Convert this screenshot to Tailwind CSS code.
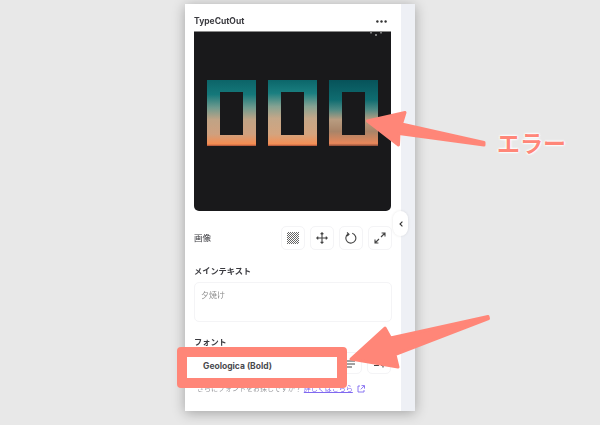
<!DOCTYPE html>
<html lang="ja">
  <head>
    <meta charset="UTF-8" />
    <title>TypeCutOut</title>
    <script src="https://cdn.jsdelivr.net/npm/@tailwindcss/browser@4"></script>
  </head>
  <body class="relative w-[600px] h-[425px] overflow-hidden bg-[#e8e8e8] pl-[185px] pt-[4px] font-['Inter','Noto_Sans_CJK_JP',sans-serif]">

    <!-- Panel -->
    <div class="relative flex w-[230px] h-[407px] shadow-[0_2px_12px_rgba(0,0,0,0.3)] blur-[0.35px]">
      <div class="w-[216px] bg-white px-[9px] pt-[9px]">
        <div class="flex items-center justify-between h-[17px] pr-[5px]">
          <p class="text-[8.500px] font-bold text-[#3a3a3f]">TypeCutOut</p>
          <svg width="11" height="3" viewBox="0 0 11 3" fill="#333"><circle cx="1.4" cy="1.5" r="1.2"/><circle cx="5.5" cy="1.5" r="1.2"/><circle cx="9.6" cy="1.5" r="1.2"/></svg>
        </div>

        <!-- Preview image -->
        <div class="relative flex justify-center gap-[12px] w-[197px] h-[180px] mt-[1px] pt-[48px] bg-[#19191b] rounded-b-[5px] border-t border-[#8a8a8a]">
          <svg class="absolute right-[9px] top-0" width="12" height="5" viewBox="0 0 12 5" fill="none" stroke="#ddd" stroke-width="1"><path d="M1 0v1.5M11 0v1.5M6 2v2"/></svg>
          <div class="flex items-center justify-center w-[49px] h-[66px] bg-[linear-gradient(180deg,#0c6468_0%,#15787a_22%,#6f9a8e_42%,#c0a385_60%,#cfa07e_82%,#f58c50_97%,#a8503a_100%)]">
            <div class="w-[23px] h-[43px] bg-[#19191b]"></div>
          </div>
          <div class="flex items-center justify-center w-[49px] h-[66px] bg-[linear-gradient(180deg,#0c666a_0%,#1a7f80_20%,#85a292_40%,#c4a788_58%,#d4a47e_82%,#f48f55_97%,#a8503a_100%)]">
            <div class="w-[23px] h-[43px] bg-[#19191b]"></div>
          </div>
          <div class="flex items-center justify-center w-[49px] h-[66px] bg-[linear-gradient(180deg,#07535a_0%,#0f6c70_30%,#4f8a84_45%,#b89c80_60%,#a98468_78%,#e8875a_96%,#8a4a38_100%)]">
            <div class="w-[23px] h-[43px] bg-[#19191b]"></div>
          </div>
        </div>

        <!-- 画像 row -->
        <div class="flex items-center justify-between mt-[15px] h-[24px]">
          <p class="text-[8.500px] text-[#3a3a3f]">画像</p>
          <div class="flex gap-[5px]">
            <div class="flex items-center justify-center w-[24px] h-[24px] rounded-[5px] border border-[#f4f4f6]">
              <svg width="12" height="12" viewBox="0 0 12 12" stroke="#555" stroke-width="0.9"><path d="M0 2L2 0M0 4L4 0M0 6L6 0M0 8L8 0M0 10L10 0M0 12L12 0M2 12L12 2M4 12L12 4M6 12L12 6M8 12L12 8M10 12L12 10"/></svg>
            </div>
            <div class="flex items-center justify-center w-[24px] h-[24px] rounded-[5px] border border-[#f4f4f6]">
              <svg width="12" height="12" viewBox="0 0 12 12" fill="none" stroke="#444" stroke-width="1.1"><path d="M6 .8v10.4M.8 6h10.4M4.6 2.2L6 .8l1.4 1.4M4.6 9.8L6 11.2l1.4-1.4M2.2 4.6L.8 6l1.4 1.4M9.8 4.6L11.2 6 9.8 7.4"/></svg>
            </div>
            <div class="flex items-center justify-center w-[24px] h-[24px] rounded-[5px] border border-[#f4f4f6]">
              <svg width="12" height="12" viewBox="0 0 12 12" fill="none" stroke="#444" stroke-width="1.1"><path d="M7.2 1.3A5 5 0 1 1 3 2M2 .5L4 2.2 2.2 4"/></svg>
            </div>
            <div class="flex items-center justify-center w-[24px] h-[24px] rounded-[5px] border border-[#f4f4f6]">
              <svg width="12" height="12" viewBox="0 0 12 12" fill="none" stroke="#444" stroke-width="1.1"><path d="M7 5l4-4M7.6 1H11v3.4M5 7l-4 4M1 7.6V11h3.4"/></svg>
            </div>
          </div>
        </div>

        <!-- Main text -->
        <p class="mt-[15px] text-[8.200px] font-bold leading-[13px] text-[#3a3a3f]">メインテキスト</p>
        <div class="mt-[4px] h-[40px] rounded-[5px] border border-[#f4f4f6] px-[6px] pt-[6px] text-[8px] leading-[12px] text-[#8c8c8c]">夕焼け</div>

        <!-- Font -->
        <p class="mt-[14px] text-[8.200px] font-bold leading-[13px] text-[#3a3a3f]">フォント</p>
        <div class="flex gap-[5px] mt-[3px]">
          <div class="w-[139px] h-[22px] rounded-[5px] border border-[#f4f4f6]"></div>
          <div class="flex items-end justify-center pb-[5px] w-[24px] h-[22px] rounded-[5px] border border-[#f4f4f6]">
            <svg width="10" height="8" viewBox="0 0 10 8" stroke="#444" stroke-width="1"><path d="M0 1h10M0 4h10M0 7h7"/></svg>
          </div>
          <div class="flex items-end justify-center pb-[5px] w-[24px] h-[22px] rounded-[5px] border border-[#f4f4f6]">
            <svg width="11" height="5" viewBox="0 0 11 5" stroke="#444" stroke-width="1.1"><path d="M0 2.5h5M7 2.5h4M9 .5v4"/></svg>
          </div>
        </div>
        <div class="flex items-center mt-[10px] pl-[3px] text-[7px] leading-[10px] text-[#9a9a9e]">
          <span>さらにフォントをお探しですか？</span>
          <span class="ml-[2px] text-[#8069f0] underline">詳しくはこちら</span>
          <svg class="ml-[4px]" width="8" height="8" viewBox="0 0 8 8" fill="none" stroke="#8069f0" stroke-width="0.9"><path d="M3 1H1v6h6V5M4.5.6h3v3M7.3.8L3.8 4.3"/></svg>
        </div>
      </div>
      <div class="flex-1 bg-[#eef0f5]"></div>

      <!-- Collapse handle -->
      <div class="absolute left-[208px] top-[207px] flex items-center justify-center w-[15px] h-[25px] rounded-full bg-white shadow-[0_0_3px_rgba(0,0,0,0.1)]">
        <svg width="4" height="6" viewBox="0 0 4 6" fill="none" stroke="#333" stroke-width="1.1"><path d="M3.4.6L1 3l2.4 2.4"/></svg>
      </div>
    </div>

    <!-- Annotations -->
    <svg class="absolute left-0 top-0" width="600" height="425" viewBox="0 0 600 425" fill="#ff8678" stroke="#ff8678" stroke-width="3" stroke-linejoin="round">
      <path d="M367.500 121L405 112.500L401.500 124L484 142.500L484 145L399 133.500L398.500 145Z"/>
      <path d="M351 359L385 328L390.500 338L488 316.500L488.500 318.500L395 354.500L398 367Z"/>
    </svg>
    <div class="absolute left-[177px] top-[347px] flex items-center w-[170px] h-[41px] rounded-[4px] border-[10px] border-[#ff8678] bg-white pl-[16px] pb-[2px] text-[8.500px] font-bold text-[#4a4a4f]">Geologica (Bold)</div>
    <p class="absolute left-[497px] top-[130px] text-[23px] leading-[28px] font-bold text-[#ff8678] [text-shadow:0_0_2px_#fff,0_0_2px_#fff,0_0_3px_#fff,0_0_3px_#fff]">エラー</p>

  </body>
</html>
